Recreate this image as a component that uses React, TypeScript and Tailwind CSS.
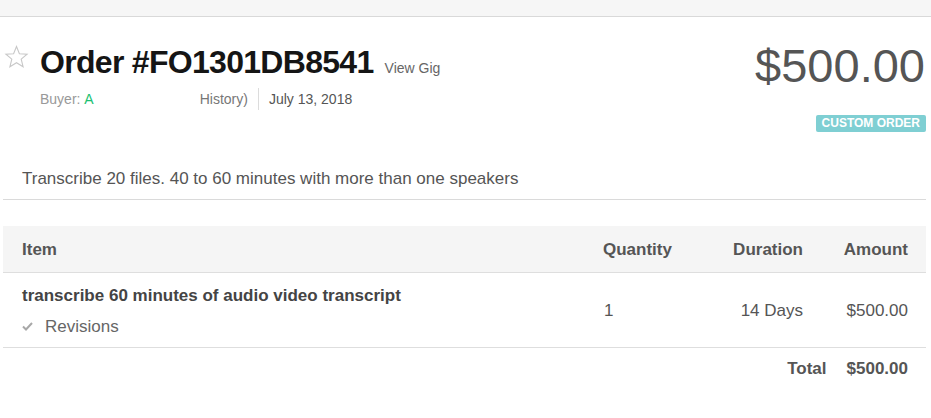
import React from "react";

function Star() {
  return (
    <svg width="25" height="24" viewBox="0 0 24 24" fill="none" stroke="#c8c8c8" strokeWidth="1.1" strokeLinejoin="miter">
      <polygon points="12,1.5 14.9,8.7 22.6,9.2 16.7,14.2 18.6,21.8 12,17.7 5.4,21.8 7.3,14.2 1.4,9.2 9.1,8.7" />
    </svg>
  );
}

function Check() {
  return (
    <svg width="11" height="9" viewBox="0 0 11 9" fill="none" stroke="#a8a8a8" strokeWidth="2">
      <path d="M1 4.5 L4 7.5 L10 1" />
    </svg>
  );
}

export default function App() {
  return (
    <div className="w-[931px] h-[418px] bg-white overflow-hidden text-[#555]" style={{ fontFamily: '"Liberation Sans", Arial, sans-serif' }}>
      <div className="h-[17px] bg-[#f6f6f6] border-b border-[#d9d9d9]" />
      <div className="flex justify-between pl-[4px] pr-[8px]">
        <div className="flex flex-col">
          <div className="flex items-start pt-[27px]">
            <div className="mt-[1px]"><Star /></div>
            <div className="flex items-baseline ml-[11px]">
              <span className="text-[32px] leading-[36px] font-bold text-[#151515] tracking-[-0.7px]">Order #FO1301DB8541</span>
              <span className="ml-[11px] text-[14px] text-[#666]">View Gig</span>
            </div>
          </div>
          <div className="flex items-center mt-[8px] ml-[36px] text-[14px] h-[22px]">
            <span className="text-[#999]">Buyer:&nbsp;</span>
            <span className="text-[#1dbf73]">A</span>
            <span className="ml-[106px] text-[#777]">History)</span>
            <span className="mx-[10px] w-px h-[22px] bg-[#dcdcdc]" />
            <span className="text-[#555]">July 13, 2018</span>
          </div>
        </div>
        <div className="flex flex-col items-end">
          <div className="text-[47px] leading-[48px] text-[#555] mt-[25px] mr-[-2px]">$500.00</div>
          <div className="mt-[25px] mr-[-3px] bg-[#7fcfd3] text-white text-[12px] font-bold leading-[17px] px-[6px] rounded-[2px]">CUSTOM ORDER</div>
        </div>
      </div>
      <div className="mx-[3px] mr-[5px] mt-[37px]">
        <div className="pl-[19px] text-[17px] text-[#555] leading-[20px] pb-[10px] border-b border-[#dadada]">
          Transcribe 20 files. 40 to 60 minutes with more than one speakers
        </div>
        <div className="mt-[26px] text-[17px]">
          <div className="grid grid-cols-[600px_110px_90px_1fr] h-[47px] items-center bg-[#f5f5f5] border-b border-[#dedede] font-bold text-[#555] pt-[2px]">
            <div className="pl-[19px]">Item</div>
            <div>Quantity</div>
            <div className="text-right">Duration</div>
            <div className="text-right pr-[18px]">Amount</div>
          </div>
          <div className="grid grid-cols-[600px_110px_90px_1fr] h-[75px] items-center border-b border-[#dedede] pt-[2px]">
            <div className="pl-[19px]">
              <div className="font-bold text-[#444] leading-[20px]">transcribe 60 minutes of audio video transcript</div>
              <div className="flex items-center mt-[11px] leading-[20px] text-[#666]">
                <Check />
                <span className="ml-[12px]">Revisions</span>
              </div>
            </div>
            <div className="text-[#555] pl-[1px]">1</div>
            <div className="text-right text-[#555]">14 Days</div>
            <div className="text-right pr-[18px] text-[#555]">$500.00</div>
          </div>
          <div className="flex justify-end items-center h-[42px] pr-[18px] font-bold text-[#555] gap-[20px]">
            <span>Total</span>
            <span>$500.00</span>
          </div>
        </div>
      </div>
    </div>
  );
}
